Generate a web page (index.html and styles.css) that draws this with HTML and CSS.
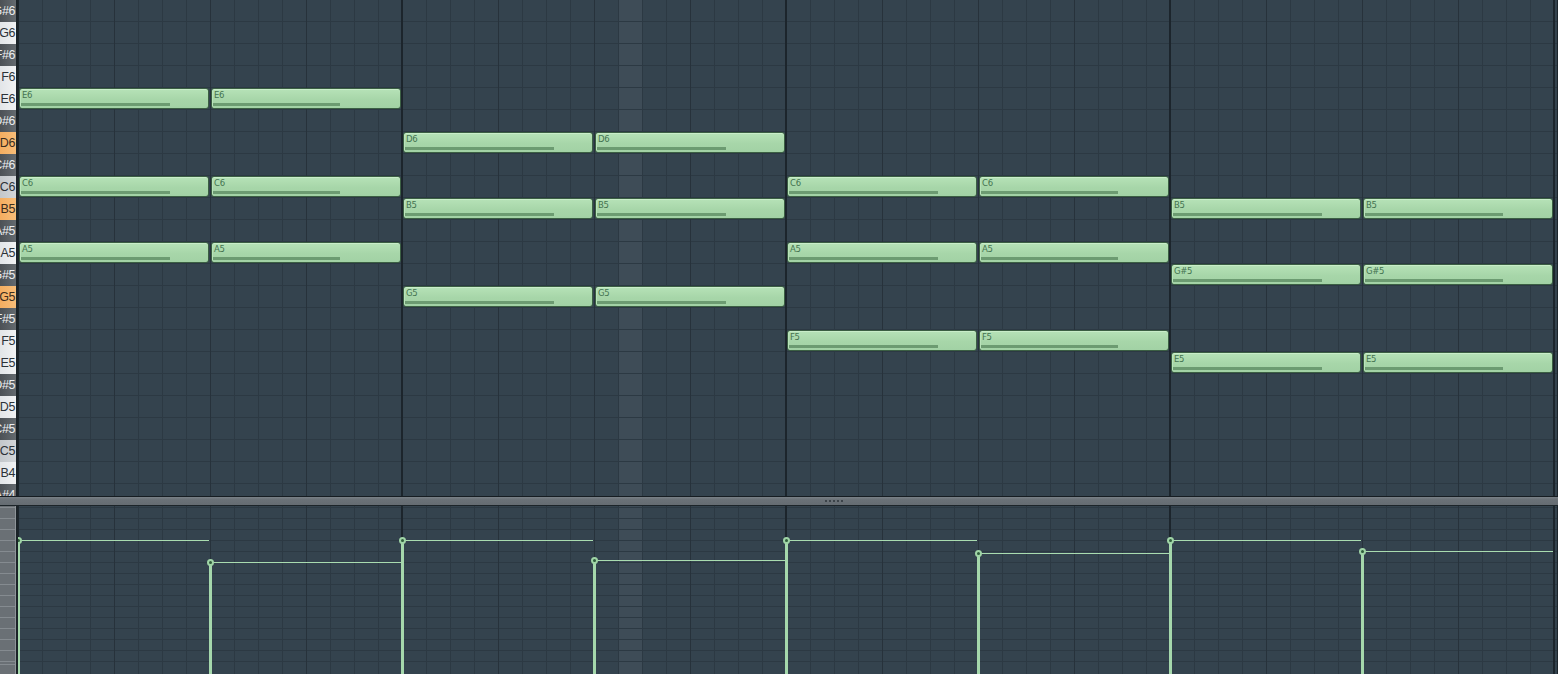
FILE: index.html
```html
<!DOCTYPE html>
<html>
<head>
<meta charset="utf-8">
<title>Piano Roll</title>
<link rel="stylesheet" href="styles.css">
</head>
<body>
<div class="roll">
  <div class="upper">
    <div class="keys">
      <div class="key b">G#6</div>
      <div class="key w">G6</div>
      <div class="key b">F#6</div>
      <div class="key w">F6</div>
      <div class="key w">E6</div>
      <div class="key b">D#6</div>
      <div class="key hl">D6</div>
      <div class="key b">C#6</div>
      <div class="key c">C6</div>
      <div class="key hl">B5</div>
      <div class="key b">A#5</div>
      <div class="key w">A5</div>
      <div class="key b">G#5</div>
      <div class="key hl">G5</div>
      <div class="key b">F#5</div>
      <div class="key w">F5</div>
      <div class="key w">E5</div>
      <div class="key b">D#5</div>
      <div class="key w">D5</div>
      <div class="key b">C#5</div>
      <div class="key c">C5</div>
      <div class="key w">B4</div>
      <div class="key b">A#4</div>
    </div>
    <div class="grid">
      <div class="note" style="left:1px;top:88px"><span class="lbl">E6</span><i class="vbar" style="width:149px"></i></div>
      <div class="note" style="left:193px;top:88px"><span class="lbl">E6</span><i class="vbar" style="width:127px"></i></div>
      <div class="note" style="left:1px;top:176px"><span class="lbl">C6</span><i class="vbar" style="width:149px"></i></div>
      <div class="note" style="left:193px;top:176px"><span class="lbl">C6</span><i class="vbar" style="width:127px"></i></div>
      <div class="note" style="left:1px;top:242px"><span class="lbl">A5</span><i class="vbar" style="width:149px"></i></div>
      <div class="note" style="left:193px;top:242px"><span class="lbl">A5</span><i class="vbar" style="width:127px"></i></div>

      <div class="note" style="left:385px;top:132px"><span class="lbl">D6</span><i class="vbar" style="width:149px"></i></div>
      <div class="note" style="left:577px;top:132px"><span class="lbl">D6</span><i class="vbar" style="width:129px"></i></div>
      <div class="note" style="left:385px;top:198px"><span class="lbl">B5</span><i class="vbar" style="width:149px"></i></div>
      <div class="note" style="left:577px;top:198px"><span class="lbl">B5</span><i class="vbar" style="width:129px"></i></div>
      <div class="note" style="left:385px;top:286px"><span class="lbl">G5</span><i class="vbar" style="width:149px"></i></div>
      <div class="note" style="left:577px;top:286px"><span class="lbl">G5</span><i class="vbar" style="width:129px"></i></div>

      <div class="note" style="left:769px;top:176px"><span class="lbl">C6</span><i class="vbar" style="width:149px"></i></div>
      <div class="note" style="left:961px;top:176px"><span class="lbl">C6</span><i class="vbar" style="width:137px"></i></div>
      <div class="note" style="left:769px;top:242px"><span class="lbl">A5</span><i class="vbar" style="width:149px"></i></div>
      <div class="note" style="left:961px;top:242px"><span class="lbl">A5</span><i class="vbar" style="width:137px"></i></div>
      <div class="note" style="left:769px;top:330px"><span class="lbl">F5</span><i class="vbar" style="width:149px"></i></div>
      <div class="note" style="left:961px;top:330px"><span class="lbl">F5</span><i class="vbar" style="width:137px"></i></div>

      <div class="note" style="left:1153px;top:198px"><span class="lbl">B5</span><i class="vbar" style="width:149px"></i></div>
      <div class="note" style="left:1345px;top:198px"><span class="lbl">B5</span><i class="vbar" style="width:138px"></i></div>
      <div class="note" style="left:1153px;top:264px"><span class="lbl">G#5</span><i class="vbar" style="width:149px"></i></div>
      <div class="note" style="left:1345px;top:264px"><span class="lbl">G#5</span><i class="vbar" style="width:138px"></i></div>
      <div class="note" style="left:1153px;top:352px"><span class="lbl">E5</span><i class="vbar" style="width:149px"></i></div>
      <div class="note" style="left:1345px;top:352px"><span class="lbl">E5</span><i class="vbar" style="width:138px"></i></div>
    </div>
  </div>
  <div class="splitter"><span class="grip"></span></div>
  <div class="lower">
    <div class="vkeys"></div>
    <div class="vgrid">
      <div class="vel" style="left:-1px;top:34px"><i class="vline"></i><i class="stem"></i><i class="dot"></i></div>
      <div class="vel" style="left:191px;top:56px"><i class="vline"></i><i class="stem"></i><i class="dot"></i></div>
      <div class="vel" style="left:383px;top:34px"><i class="vline"></i><i class="stem"></i><i class="dot"></i></div>
      <div class="vel" style="left:575px;top:54px"><i class="vline"></i><i class="stem"></i><i class="dot"></i></div>
      <div class="vel" style="left:767px;top:34px"><i class="vline"></i><i class="stem"></i><i class="dot"></i></div>
      <div class="vel" style="left:959px;top:47px"><i class="vline"></i><i class="stem"></i><i class="dot"></i></div>
      <div class="vel" style="left:1151px;top:34px"><i class="vline"></i><i class="stem"></i><i class="dot"></i></div>
      <div class="vel" style="left:1343px;top:45px"><i class="vline"></i><i class="stem"></i><i class="dot"></i></div>
    </div>
  </div>
</div>
</body>
</html>
```
FILE: styles.css
```css
html, body {
  margin: 0;
  padding: 0;
}
body {
  width: 1558px;
  height: 674px;
  overflow: hidden;
  background: #34434e;
  font-family: "Liberation Sans", Arial, sans-serif;
}
.roll {
  display: flex;
  flex-direction: column;
  height: 674px;
}
.upper {
  display: flex;
  height: 496px;
  flex: none;
}
.keys {
  width: 16px;
  flex: none;
  border-right: 2px solid #1b2328;
  overflow: hidden;
  display: flex;
  flex-direction: column;
}
.key {
  height: 22px;
  flex: none;
  display: flex;
  align-items: center;
  justify-content: flex-end;
  font-size: 12.5px;
  letter-spacing: -0.4px;
  white-space: nowrap;
  overflow: hidden;
  padding-right: 1px;
}
.key.w {
  background: linear-gradient(90deg, #e2e5e8, #f1f2f3);
  color: #2c3238;
}
.key.c {
  background: linear-gradient(90deg, #c3c7cb, #d3d6d9);
  color: #2c3238;
}
.key.b {
  background: linear-gradient(90deg, #4c5156, #646a6f);
  color: #eceef0;
}
.key.hl {
  background: linear-gradient(90deg, #f4ad60, #f8bd78);
  color: #3a2c1e;
}
.grid {
  flex: 1;
  position: relative;
  overflow: hidden;
  background:
    repeating-linear-gradient(90deg, #1c252c 0 2px, transparent 2px 384px) -1px 0 / auto,
    repeating-linear-gradient(90deg, #27323b 0 1px, transparent 1px 96px),
    repeating-linear-gradient(90deg, #2c3943 0 1px, transparent 1px 24px),
    repeating-linear-gradient(180deg, transparent 0 21px, #2c3943 21px 22px),
    linear-gradient(90deg, transparent 601px, #3e4c57 601px 624px, transparent 624px),
    #34434e;
}
.note {
  position: absolute;
  width: 190px;
  height: 21px;
  box-sizing: border-box;
  border: 1px solid #3b5f43;
  border-radius: 3px;
  background: linear-gradient(180deg, #b6e2b7 0, #a7d6a9 55%, #a2d2a5 100%);
  box-shadow: inset 0 1px 0 #c9edc9, inset 1px 0 0 #b9e3ba;
}
.lbl {
  position: absolute;
  left: 2px;
  top: 1px;
  font-family: "DejaVu Sans", sans-serif;
  font-size: 8.5px;
  line-height: 10px;
  color: #447350;
  letter-spacing: -0.3px;
}
.vbar {
  position: absolute;
  left: 1px;
  bottom: 2px;
  height: 3px;
  background: #6c9b71;
}
.splitter {
  height: 10px;
  flex: none;
  box-sizing: border-box;
  border-top: 1px solid #161d22;
  border-bottom: 1px solid #1c2429;
  background: linear-gradient(180deg, #7a8187 0, #6b7278 30%, #656c72 100%);
  display: flex;
  align-items: center;
}
.grip {
  margin-left: 825px;
  width: 18px;
  height: 2px;
  background: repeating-linear-gradient(90deg, #3c4349 0 2px, transparent 2px 4px);
}
.lower {
  flex: 1;
  display: flex;
  min-height: 0;
}
.vkeys {
  width: 16px;
  flex: none;
  border-right: 2px solid #1b2328;
  box-sizing: content-box;
  background:
    linear-gradient(90deg, transparent 15px, #8e9499 15px),
    repeating-linear-gradient(180deg, #858b90 0 1px, #6a7075 1px 11px) 0 -10px / auto,
    #6a7075;
}
.vgrid {
  flex: 1;
  position: relative;
  overflow: hidden;
  background:
    repeating-linear-gradient(90deg, #1c252c 0 2px, transparent 2px 384px) -1px 0 / auto,
    repeating-linear-gradient(90deg, #27323b 0 1px, transparent 1px 96px),
    repeating-linear-gradient(90deg, #2c3943 0 1px, transparent 1px 24px),
    repeating-linear-gradient(180deg, transparent 0 10px, #2c3943 10px 11px) 0 -9px / auto,
    linear-gradient(90deg, transparent 601px, #3e4c57 601px 624px, transparent 624px),
    #34434e;
}
.vel {
  position: absolute;
  width: 192px;
  bottom: 0;
}
.vline {
  position: absolute;
  left: 1px;
  width: 191px;
  top: 0;
  height: 1px;
  background: #a9dcb0;
}
.stem {
  position: absolute;
  left: 0;
  top: 0;
  bottom: 0;
  width: 3px;
  background: #a5d8ac;
}
.dot {
  position: absolute;
  left: -2px;
  top: -3px;
  width: 7px;
  height: 7px;
  box-sizing: border-box;
  border-radius: 50%;
  border: 2px solid #9fd4a6;
  background: #2f5d3b;
}
```
